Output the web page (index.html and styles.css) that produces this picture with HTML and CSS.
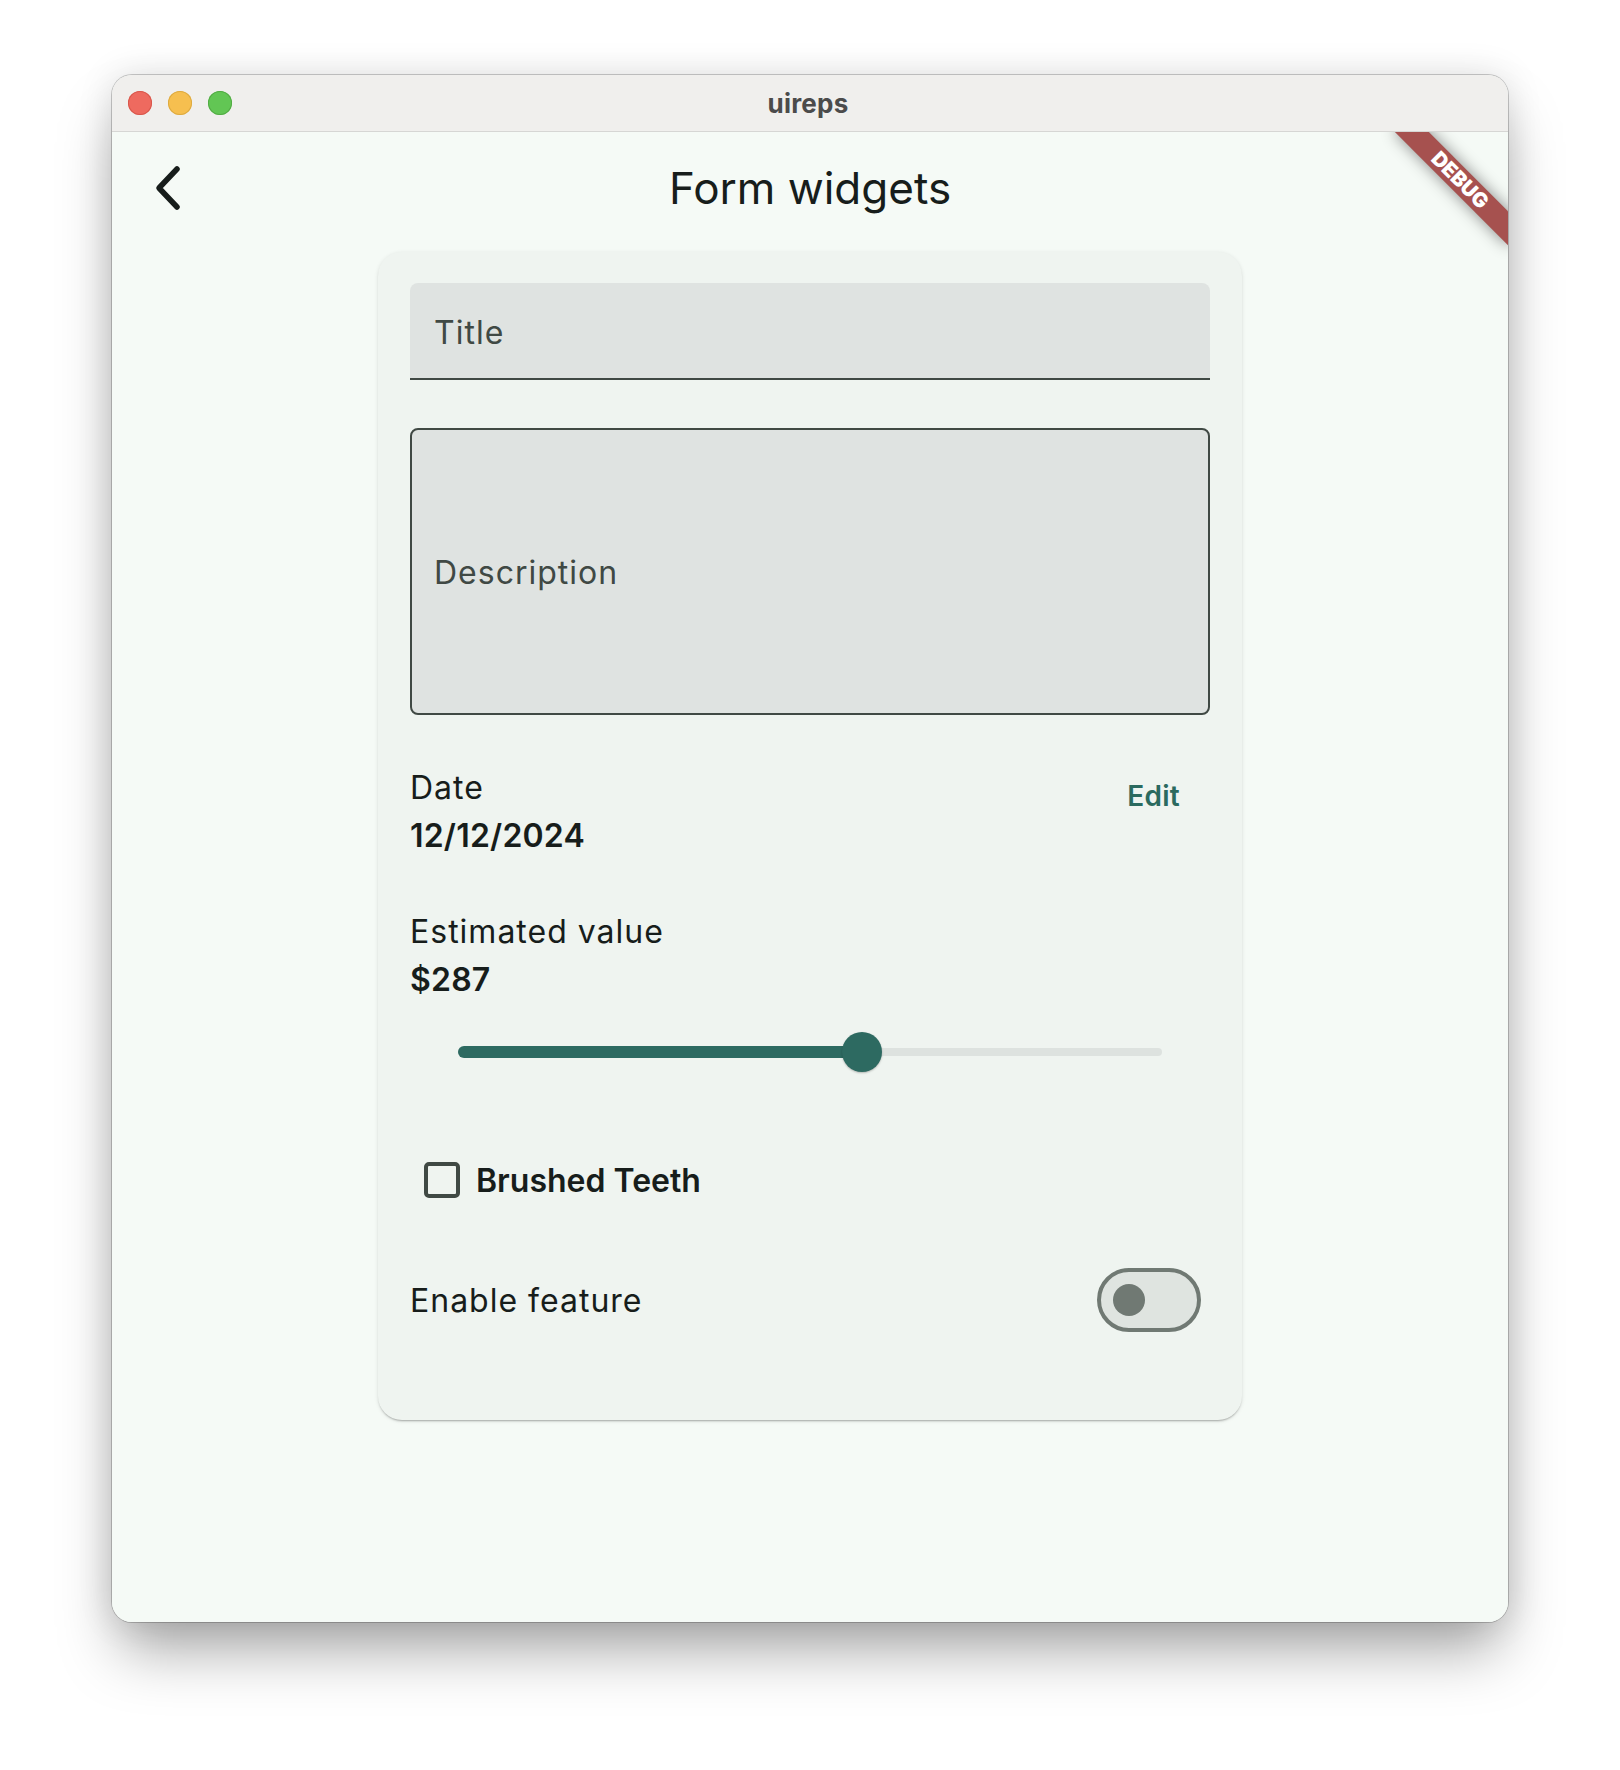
FILE: index.html
```html
<!DOCTYPE html>
<html lang="en">
<head>
<meta charset="utf-8">
<title>uireps</title>
<link rel="stylesheet" href="styles.css">
</head>
<body>
<div class="window">
  <div class="titlebar">
    <div class="lights">
      <span class="light red"></span>
      <span class="light yellow"></span>
      <span class="light green"></span>
    </div>
    <div class="wintitle">uireps</div>
    <div></div>
  </div>
  <div class="content">
    <div class="appbar">
      <div class="leading">
        <svg class="back" width="48" height="48" viewBox="0 0 48 48" aria-hidden="true">
          <polyline points="33,5 15,24 33,43" fill="none" stroke="#171d1b" stroke-width="5.5" stroke-linecap="round" stroke-linejoin="round"/>
        </svg>
      </div>
      <div class="apptitle">Form widgets</div>
      <div></div>
    </div>

    <div class="card">
      <div class="field filled"><span class="hint">Title</span></div>
      <div class="field outlined"><span class="hint">Description</span></div>

      <div class="daterow">
        <div class="pair">
          <div class="label">Date</div>
          <div class="value">12/12/2024</div>
        </div>
        <button class="textbtn">Edit</button>
      </div>

      <div class="pair est">
        <div class="label">Estimated value</div>
        <div class="value">$287</div>
      </div>

      <div class="slider">
        <div class="track">
          <div class="inactive"></div>
          <div class="active" style="width:404px"></div>
          <div class="thumb" style="left:384px"></div>
        </div>
      </div>

      <div class="checkrow">
        <span class="checkbox"></span>
        <span class="checklabel">Brushed Teeth</span>
      </div>

      <div class="switchrow">
        <span class="label">Enable feature</span>
        <span class="switch"><span class="knob"></span></span>
      </div>
    </div>

    <div class="banner">DEBUG</div>
  </div>
</div>
</body>
</html>
```

FILE: styles.css
```css
* { box-sizing: border-box; }

html, body {
  margin: 0;
  padding: 0;
  background: #ffffff;
}

body {
  width: 1620px;
  height: 1770px;
  font-family: "Inter", "Noto Sans", sans-serif;
  color: #171d1b;
  padding-top: 75px;
  padding-left: 112px;
}

.window {
  width: 1396px;
  height: 1547px;
  border-radius: 20px;
  overflow: hidden;
  display: flex;
  flex-direction: column;
  background: #f5faf6;
  box-shadow: 0 36px 60px -8px rgba(0,0,0,0.34), 0 0 36px rgba(0,0,0,0.12), 0 0 0 1px rgba(0,0,0,0.2);
}

.titlebar {
  height: 57px;
  flex: none;
  background: #f0efed;
  border-bottom: 1px solid #d6d6d4;
  display: grid;
  grid-template-columns: 1fr auto 1fr;
  align-items: center;
}

.lights {
  display: flex;
  gap: 16px;
  padding-left: 16px;
}

.light {
  width: 24px;
  height: 24px;
  border-radius: 50%;
  display: block;
}
.red { background: #ee6a5f; box-shadow: inset 0 0 0 1px #d8574c; }
.yellow { background: #f6bf4f; box-shadow: inset 0 0 0 1px #ddaa40; }
.green { background: #62c654; box-shadow: inset 0 0 0 1px #52ab44; }

.wintitle {
  font-size: 26px;
  font-weight: 700;
  color: #4b4b4b;
  letter-spacing: 0.2px;
  margin-left: -4px;
}

.content {
  position: relative;
  flex: 1;
  overflow: hidden;
  background: #f5faf6;
}

.appbar {
  height: 112px;
  display: grid;
  grid-template-columns: 112px 1fr 112px;
  align-items: center;
}

.leading {
  display: flex;
  justify-content: center;
  align-items: center;
}

.back { display: block; }

.apptitle {
  text-align: center;
  font-size: 44px;
  font-weight: 400;
  color: #171d1b;
  letter-spacing: 0;
}

.card {
  width: 864px;
  margin: 8px auto 0;
  background: #eff4f0;
  border-radius: 24px;
  padding: 31px 32px 80px;
  box-shadow: 0 2px 2px -1px rgba(0,0,0,0.28), 0 1px 4px rgba(0,0,0,0.10);
}

.field {
  display: flex;
  align-items: center;
  background: #dfe3e1;
  padding-left: 24px;
  font-size: 32px;
  line-height: 48px;
  letter-spacing: 1px;
  color: #404944;
}

.filled {
  height: 97px;
  border-radius: 8px 8px 0 0;
  border-bottom: 2px solid #404944;
  padding-top: 4px;
}

.outlined {
  margin-top: 48px;
  height: 287px;
  border: 2px solid #404944;
  border-radius: 8px;
  padding-left: 22px;
  padding-top: 2px;
}

.daterow {
  margin-top: 49px;
  display: flex;
  justify-content: space-between;
  align-items: flex-start;
}

.pair {
  font-size: 32px;
  line-height: 48px;
}

.label {
  font-weight: 400;
  color: #171d1b;
  letter-spacing: 1px;
}

.value {
  font-weight: 600;
  color: #171d1b;
  letter-spacing: 0.2px;
}

.est { margin-top: 48px; }

.textbtn {
  height: 64px;
  border: 0;
  background: transparent;
  padding: 0 30px 0 24px;
  font-family: inherit;
  font-size: 28px;
  line-height: 64px;
  font-weight: 600;
  letter-spacing: 0.3px;
  color: #2b6a5f;
}

.slider {
  height: 96px;
  padding: 0 48px;
}

.track {
  position: relative;
  height: 96px;
  display: flex;
  align-items: center;
}

.inactive {
  width: 100%;
  height: 8px;
  border-radius: 4px;
  background: #dde2df;
}

.active {
  position: absolute;
  left: 0;
  top: 42px;
  height: 12px;
  border-radius: 6px 0 0 6px;
  background: #2d6a61;
}

.thumb {
  position: absolute;
  top: 28px;
  width: 40px;
  height: 40px;
  border-radius: 50%;
  background: #2d6a61;
  box-shadow: 0 1px 2px rgba(0,0,0,0.25);
}

.checkrow {
  margin-top: 40px;
  height: 80px;
  display: flex;
  align-items: center;
  padding-left: 14px;
  gap: 16px;
}

.checkbox {
  width: 36px;
  height: 36px;
  border: 4px solid #404944;
  border-radius: 5px;
  display: block;
}

.checklabel {
  font-size: 32px;
  font-weight: 600;
  letter-spacing: 0;
  color: #171d1b;
}

.switchrow {
  margin-top: 40px;
  height: 80px;
  display: flex;
  justify-content: space-between;
  align-items: center;
  font-size: 32px;
}

.switch {
  width: 104px;
  height: 64px;
  margin-right: 9px;
  border: 4px solid #707973;
  border-radius: 32px;
  background: #dfe4e0;
  display: flex;
  align-items: center;
  padding-left: 12px;
}

.knob {
  width: 32px;
  height: 32px;
  border-radius: 50%;
  background: #707973;
  display: block;
}

.banner {
  position: absolute;
  top: 56px;
  right: -80px;
  width: 160px;
  height: 24px;
  transform-origin: 80px -56px;
  transform: rotate(45deg);
  background: #a6514f;
  color: #ffffff;
  font-size: 20.4px;
  font-weight: 900;
  line-height: 24px;
  text-align: center;
  box-shadow: 0 0 16px rgba(0,0,0,0.45);
}
```
